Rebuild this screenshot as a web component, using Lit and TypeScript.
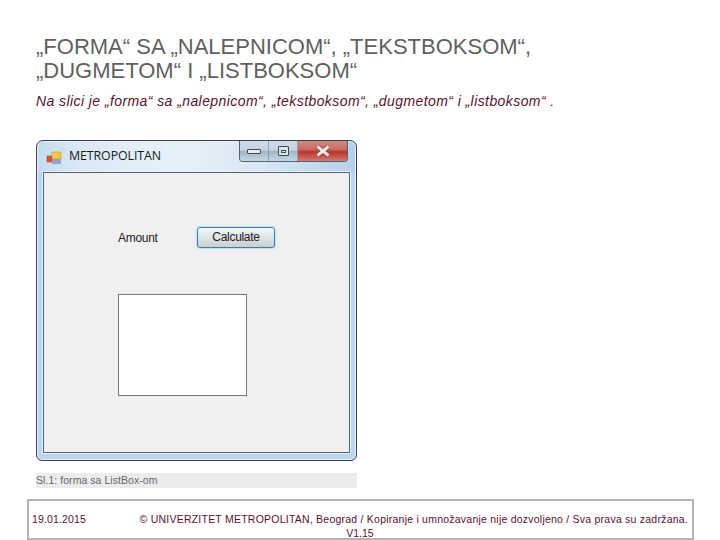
import { LitElement, html, css } from "lit";
import { customElement } from "lit/decorators.js";

@customElement("app-root")
export class AppRoot extends LitElement {
  static styles = css`
    :host { display: block; width: 720px; height: 540px; overflow: hidden; background: #fff; font-family: "Liberation Sans", Arial, sans-serif; }
    .page { display: flex; flex-direction: column; height: 540px; box-sizing: border-box; padding-top: 35px; }
    h1 { margin: 0 0 0 36px; font-weight: 400; font-size: 22px; line-height: 24px; color: #5f5f5f; }
    .lead { margin: 10px 0 0 36px; font-style: italic; font-size: 14px; line-height: 16px; letter-spacing: 0.42px; color: #5a1033; }
    .win { box-sizing: border-box; margin: 31px 0 0 36px; width: 321px; height: 321px; flex: none; border: 1px solid #3b4048; border-radius: 7px 7px 6px 6px;
      background: linear-gradient(90deg, #c4dbee 0%, #dbe9f5 14%, #e8f1f9 45%, #d6e6f3 72%, #b4d0e8 100%) top / 100% 31px no-repeat, #b9d5ef;
      padding: 0 6px 7px; display: flex; flex-direction: column; box-shadow: inset 0 0 0 1px #e6f1fb; }
    .bar { height: 31px; flex: none; display: flex; align-items: flex-start; }
    .logo { margin: 10px 0 0 3px; flex: none; }
    .name { margin: 7px 0 0 7px; font: 12.4px/16px "Open Sans", sans-serif; color: #1a1a1a; flex: 1; letter-spacing: -0.1px; }
    .ctl { display: flex; height: 21px; margin-right: 2px; border: 1px solid #59626e; border-top: none; border-radius: 0 0 4px 4px; overflow: hidden; flex: none; box-sizing: border-box; }
    .ctl > span { display: flex; align-items: center; justify-content: center; box-sizing: border-box; }
    .min, .max { width: 29px; background: linear-gradient(180deg, #cfdce8 0%, #c3d3e1 46%, #a3b5c5 52%, #c6d6e3 100%); border-right: 1px solid #8da0b0; }
    .cls { width: 49px; background: linear-gradient(180deg, #d08b82 0%, #cb6a5f 42%, #b8342b 54%, #d57a70 100%); }
    .mi { display: block; width: 14px; height: 5px; border: 1px solid #3f4a55; background: #e9eef3; border-radius: 1px; box-sizing: border-box; }
    .ma { width: 11px; height: 10px; border: 1px solid #3f4a55; background: #dce6ee; box-sizing: border-box; display: flex; align-items: center; justify-content: center; border-radius: 1px; }
    .ma i { display: block; width: 5px; height: 3px; border: 1px solid #3f4a55; box-sizing: border-box; }
    .client { flex: 1; box-sizing: border-box; background: #f0f0f0; border: 1px solid #566472; padding: 54px 0 0 74px; display: flex; flex-direction: column; box-shadow: 0 0 0 1px #e6f1fb; }
    .row { display: flex; align-items: center; height: 21px; }
    .amt { width: 79px; font: 12px/16px "Liberation Sans", sans-serif; color: #1c1c1c; letter-spacing: -0.3px; }
    .btn { box-sizing: border-box; width: 78px; height: 21px; border: 1px solid #3f7f9f; border-radius: 3px; background: linear-gradient(180deg, #eef7fb 0%, #dfe4e6 50%, #c9cfd1 100%); box-shadow: 0 0 1px 1px #b9e2f3; font: 12px/18px "Liberation Sans", sans-serif; color: #1c1c1c; text-align: center; letter-spacing: -0.3px; }
    .list { box-sizing: border-box; width: 129px; height: 102px; margin-top: 46px; background: #fff; border: 1px solid #777; }
    .cap { box-sizing: border-box; margin: 12px 0 0 36px; width: 321px; height: 15px; flex: none; background: #ececec; color: #666; font-size: 10.5px; line-height: 15px; letter-spacing: 0.05px; }
    .foot { box-sizing: border-box; margin: 11px 0 0 27px; width: 667px; height: 41px; border: 2px solid #b5b5b5; color: #5a1033; font-size: 10.5px; line-height: 14px; flex: none; text-align: center; padding: 11px 4px 0 3px; }
    .l1 { display: flex; justify-content: space-between; letter-spacing: 0.23px; }
    .date { letter-spacing: 0.15px; }
  `;
  render() {
    return html`<div class="page">
      <h1>„FORMA“ SA „NALEPNICOM“, „TEKSTBOKSOM“,<br />„DUGMETOM“ I „LISTBOKSOM“</h1>
      <p class="lead">Na slici je „forma“ sa „nalepnicom“, „tekstboksom“, „dugmetom“ i „listboksom“ .</p>
      <div class="win">
        <div class="bar">
          <svg class="logo" width="16" height="14" viewBox="0 0 16 14">
            <rect x="1" y="5" width="5" height="6" fill="#d9562c" stroke="#a33" stroke-width=".5" />
            <rect x="6" y="1" width="9" height="7" fill="#f3c84a" stroke="#b98f2a" stroke-width=".5" />
            <rect x="6" y="8" width="9" height="5" fill="#8ea4c8" />
          </svg>
          <div class="name">METROPOLITAN</div>
          <div class="ctl">
            <span class="min"><span class="mi"></span></span>
            <span class="max"><span class="ma"><i></i></span></span>
            <span class="cls"><svg width="18" height="12" viewBox="0 0 18 12"><path d="M3.5 1.5 L14.5 10.5 M14.5 1.5 L3.5 10.5" stroke="#7c2a24" stroke-width="4.4" /><path d="M3.5 1.5 L14.5 10.5 M14.5 1.5 L3.5 10.5" stroke="#f1e6e4" stroke-width="3.2" /></svg></span>
          </div>
        </div>
        <div class="client">
          <div class="row"><div class="amt">Amount</div><div class="btn">Calculate</div></div>
          <div class="list"></div>
        </div>
      </div>
      <div class="cap">Sl.1: forma sa ListBox-om</div>
      <div class="foot">
        <div class="l1"><span class="date">19.01.2015</span><span>© UNIVERZITET METROPOLITAN, Beograd / Kopiranje i umnožavanje nije dozvoljeno / Sva prava su zadržana.</span></div>
        <div>V1.15</div>
      </div>
    </div>`;
  }
}
